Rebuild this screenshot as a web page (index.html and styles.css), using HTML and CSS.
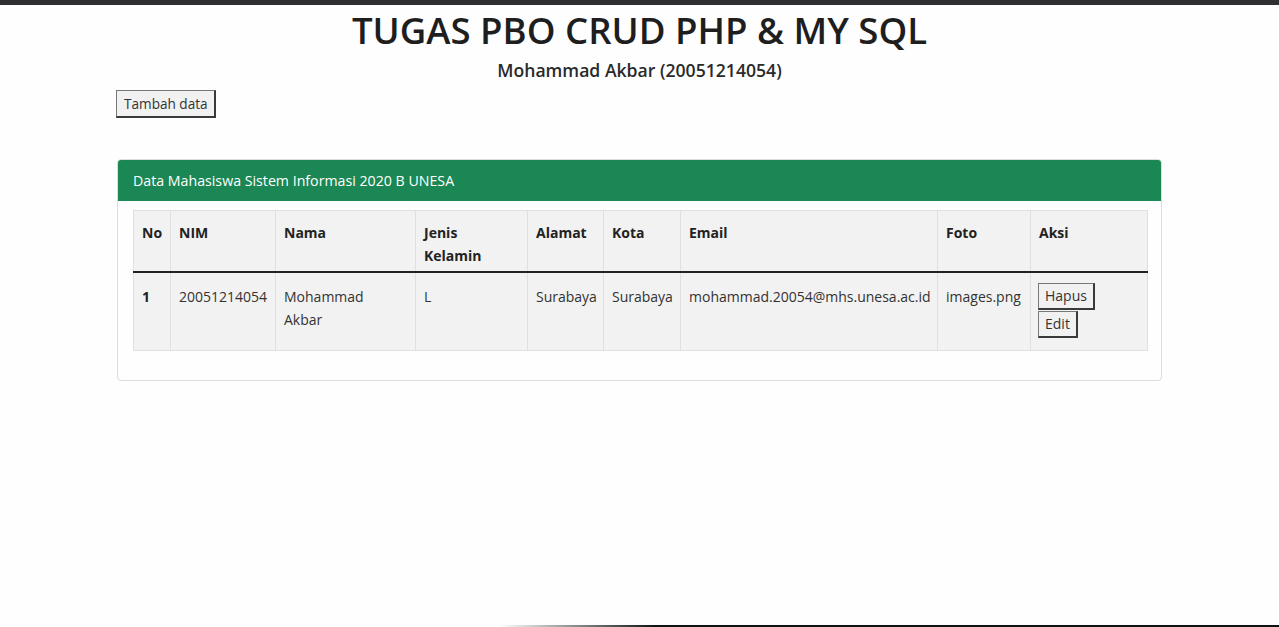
FILE: index.html
```html
<!DOCTYPE html>
<html lang="id">
<head>
<meta charset="utf-8">
<title>TUGAS PBO CRUD PHP & MY SQL</title>
<link rel="stylesheet" href="styles.css">
</head>
<body>
<div class="topbar"></div>
<main class="page">
  <h1 class="title">TUGAS PBO CRUD PHP &amp; MY SQL</h1>
  <h2 class="subtitle">Mohammad Akbar (20051214054)</h2>
  <div class="actions"><button class="btn btn-tambah">Tambah data</button></div>
  <section class="card">
    <div class="card-header">Data Mahasiswa Sistem Informasi 2020 B UNESA</div>
    <div class="card-body">
      <table class="tbl">
        <colgroup>
          <col class="c-no"><col class="c-nim"><col class="c-nama"><col class="c-jk"><col class="c-alamat"><col class="c-kota"><col class="c-email"><col class="c-foto"><col class="c-aksi">
        </colgroup>
        <thead>
          <tr><th>No</th><th>NIM</th><th>Nama</th><th class="wrap">Jenis Kelamin</th><th>Alamat</th><th>Kota</th><th>Email</th><th>Foto</th><th>Aksi</th></tr>
        </thead>
        <tbody>
          <tr>
            <td class="no">1</td>
            <td>20051214054</td>
            <td class="wrap">Mohammad Akbar</td>
            <td>L</td>
            <td>Surabaya</td>
            <td>Surabaya</td>
            <td>mohammad.20054@mhs.unesa.ac.id</td>
            <td>images.png</td>
            <td class="aksi"><button class="btn btn-hapus">Hapus</button><button class="btn btn-edit">Edit</button></td>
          </tr>
        </tbody>
      </table>
    </div>
  </section>
</main>
<div class="bottombar"></div>
</body>
</html>
```
FILE: styles.css
```css
html, body { margin: 0; padding: 0; background: #fefefe; }
body {
  font-family: "Open Sans", "Liberation Sans", sans-serif;
  color: #212529;
  height: 627px;
  overflow: hidden;
  position: relative;
}
.topbar { height: 5px; background: #2f2f31; }
.page { padding: 0 116px; }
.title {
  margin: 2px 0 0;
  text-align: center;
  font-size: 36.6px;
  font-weight: 600;
  line-height: 46px;
  color: #1e1e1e;
}
.subtitle {
  margin: 6px 0 0;
  text-align: center;
  font-size: 17.6px;
  font-weight: 600;
  line-height: 22px;
  color: #2a2a2a;
}
.actions { margin-top: 9px; }
.btn {
  font-family: "Open Sans", "Liberation Sans", sans-serif;
  font-size: 14px;
  color: #333;
  background: #f1f1f1;
  border: 2px solid #3a3a3a;
  border-top-color: #777;
  border-left-color: #777;
  border-top-width: 1px;
  border-left-width: 1px;
  padding: 0 6px;
  line-height: 22px;
  margin: 0;
  display: block;
  box-sizing: border-box;
  text-align: left;
  white-space: nowrap;
}
.btn-tambah { width: 100px; height: 28px; padding: 0 5px 0 7px; font-size: 13.6px; }
.card {
  margin: 41px 1px 0 1px;
  border: 1px solid #ddd;
  border-radius: 4px;
  overflow: hidden;
}
.card-header {
  background: #1b8754;
  color: #fff;
  font-size: 14.2px;
  height: 41px;
  line-height: 41px;
  padding: 0 15px;
}
.card-body { padding: 9px 15px 29px; }
.tbl {
  width: 1014px;
  border-collapse: collapse;
  background: #f2f2f2;
  font-size: 14px;
  line-height: 23px;
  table-layout: fixed;
}
.tbl th, .tbl td {
  border: 1px solid #e0e0e0;
  padding: 12px 8px 16px 8px;
  text-align: left;
  vertical-align: top;
}
.tbl th {
  font-weight: 700;
  color: #222;
  padding-top: 10px;
  padding-bottom: 4px;
  border-bottom: 2px solid #222;
}
.tbl td { color: #333; }
.tbl .wrap { padding-right: 24px; }
.tbl td.no { font-weight: 700; color: #222; }
.tbl td.aksi { padding: 10px 8px 12px 7px; }
.tbl td.aksi .btn-hapus { width: 57px; height: 27px; margin-bottom: 1px; }
.tbl td.aksi .btn-edit { width: 40px; height: 27px; }
.c-no { width: 37px; }
.c-nim { width: 105px; }
.c-nama { width: 140px; }
.c-jk { width: 112px; }
.c-alamat { width: 76px; }
.c-kota { width: 77px; }
.c-email { width: 257px; }
.c-foto { width: 93px; }
.c-aksi { width: 117px; }
.bottombar {
  position: absolute;
  left: 500px; right: 0; bottom: 0;
  height: 2px;
  background: linear-gradient(to right, rgba(0,0,0,0), #111 20%, #111);
}
```
